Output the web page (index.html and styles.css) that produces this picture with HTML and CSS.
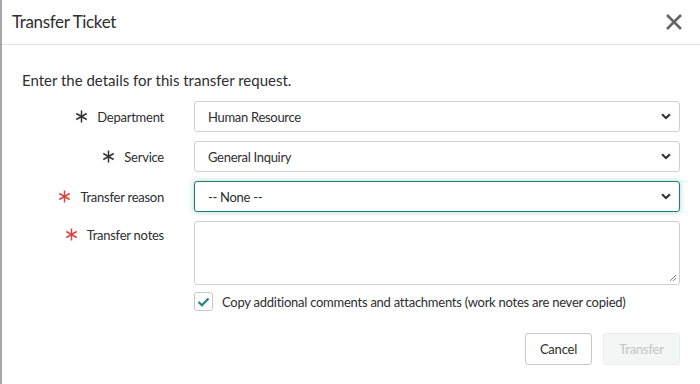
FILE: index.html
```html
<!DOCTYPE html>
<html>
<head>
<meta charset="utf-8">
<link rel="stylesheet" href="styles.css">
</head>
<body>
<div class="modal">
  <div class="header">
    <h1 class="title">Transfer Ticket</h1>
    <svg class="close" width="18" height="18" viewBox="0 0 18 18"><path d="M2 2 L16 16 M16 2 L2 16" stroke="#656565" stroke-width="2.6" stroke-linecap="butt"/></svg>
  </div>
  <div class="body">
    <p class="intro">Enter the details for this transfer request.</p>
    <div class="form">
      <label class="label"><svg class="star" width="13" height="13" viewBox="0 0 13 13"><path d="M6.5 0.5 V12.5 M1.3 3.5 L11.7 9.5 M1.3 9.5 L11.7 3.5" stroke="#333" stroke-width="1.5"/></svg>Department</label>
      <div class="select"><span>Human Resource</span><svg class="chev" width="10" height="7" viewBox="0 0 10 7"><path d="M1 1.2 L5 5 L9 1.2" fill="none" stroke="#333" stroke-width="2"/></svg></div>

      <label class="label"><svg class="star" width="13" height="13" viewBox="0 0 13 13"><path d="M6.5 0.5 V12.5 M1.3 3.5 L11.7 9.5 M1.3 9.5 L11.7 3.5" stroke="#333" stroke-width="1.5"/></svg>Service</label>
      <div class="select"><span>General Inquiry</span><svg class="chev" width="10" height="7" viewBox="0 0 10 7"><path d="M1 1.2 L5 5 L9 1.2" fill="none" stroke="#333" stroke-width="2"/></svg></div>

      <label class="label"><svg class="star" width="13" height="13" viewBox="0 0 13 13"><path d="M6.5 0.5 V12.5 M1.3 3.5 L11.7 9.5 M1.3 9.5 L11.7 3.5" stroke="#d8433f" stroke-width="1.5"/></svg>Transfer reason</label>
      <div class="select focus"><span>-- None --</span><svg class="chev" width="10" height="7" viewBox="0 0 10 7"><path d="M1 1.2 L5 5 L9 1.2" fill="none" stroke="#333" stroke-width="2"/></svg></div>

      <label class="label top"><svg class="star" width="13" height="13" viewBox="0 0 13 13"><path d="M6.5 0.5 V12.5 M1.3 3.5 L11.7 9.5 M1.3 9.5 L11.7 3.5" stroke="#d8433f" stroke-width="1.5"/></svg>Transfer notes</label>
      <div class="textarea"><svg class="grip" width="8" height="8" viewBox="0 0 8 8"><path d="M7 1 L1 7 M7 4 L4 7" stroke="#888" stroke-width="1"/></svg></div>

      <div></div>
      <div class="check-row">
        <span class="checkbox"><svg width="13" height="10" viewBox="0 0 13 10"><path d="M1.5 5 L5 8.3 L11.5 1.5" fill="none" stroke="#1e8577" stroke-width="2.2"/></svg></span>
        <span class="check-text">Copy additional comments and attachments (work notes are never copied)</span>
      </div>
    </div>
    <div class="footer">
      <button class="btn">Cancel</button>
      <button class="btn disabled">Transfer</button>
    </div>
  </div>
</div>
</body>
</html>
```
FILE: styles.css
```css
* { box-sizing: border-box; }
html, body { margin: 0; padding: 0; background: #fff; }
body {
  font-family: "Lato", "Liberation Sans", sans-serif;
  color: #2e2e2e;
  width: 700px;
  height: 384px;
  overflow: hidden;
}
.modal {
  height: 384px;
  border-left: 2px solid #a6a6a6;
  background: #fff;
}
.header {
  height: 45px;
  border-bottom: 1px solid #e2e2e2;
  display: flex;
  align-items: center;
  justify-content: space-between;
  padding: 0 17px 0 10px;
}
.title {
  margin: 0;
  font-size: 17px;
  font-weight: 400;
  letter-spacing: -0.35px;
  color: #2e2e2e;
  padding-bottom: 1px;
}
.close { display: block; margin-top: -1px; }
.body {
  padding: 0 20px 0 20px;
}
.intro {
  margin: 0;
  padding-top: 26px;
  height: 56px;
  font-size: 15px;
  color: #2e2e2e;
}
.form {
  display: grid;
  grid-template-columns: 142px 486px;
  column-gap: 30px;
  row-gap: 9px;
}
.label {
  display: flex;
  align-items: center;
  justify-content: flex-end;
  gap: 9px;
  font-size: 13px;
  letter-spacing: -0.25px;
  color: #2e2e2e;
  height: 31px;
}
.label.top { height: 31px; align-self: start; margin-top: -2px; }
.star { display: block; }
.select {
  height: 31px;
  border: 1px solid #d0d0d0;
  border-radius: 3px;
  display: flex;
  align-items: center;
  justify-content: space-between;
  padding: 0 8px 0 13px;
  font-size: 13px;
  letter-spacing: -0.3px;
  color: #2e2e2e;
  background: #fff;
}
.select.focus {
  border-color: #1d7f72;
  box-shadow: 0 0 5px 1px rgba(40, 130, 115, 0.25);
}
.chev { display: block; }
.textarea {
  height: 64px;
  border: 1px solid #d0d0d0;
  border-radius: 3px;
  position: relative;
  margin-bottom: -1px;
}
.grip { position: absolute; right: 2px; bottom: 2px; }
.check-row {
  display: flex;
  align-items: center;
  gap: 9px;
  margin-top: -1px;
}
.checkbox {
  width: 19px;
  height: 19px;
  border: 1px solid #c8c8c8;
  border-radius: 3px;
  display: flex;
  align-items: center;
  justify-content: center;
}
.checkbox svg { display: block; margin-top: 1px; }
.check-text { font-size: 13px; letter-spacing: -0.25px; color: #2e2e2e; }
.footer {
  display: flex;
  justify-content: flex-end;
  gap: 11px;
  margin-top: 22px;
}
.btn {
  height: 32px;
  border: 1px solid #c8c8c8;
  border-radius: 3px;
  background: #fff;
  font-family: inherit;
  font-size: 13px;
  letter-spacing: -0.2px;
  color: #2e2e2e;
  padding: 0;
  width: 67px;
}
.btn.disabled {
  width: 77px;
  background: #f4f5f5;
  border-color: #ececec;
  color: #c4c4c4;
}
```
